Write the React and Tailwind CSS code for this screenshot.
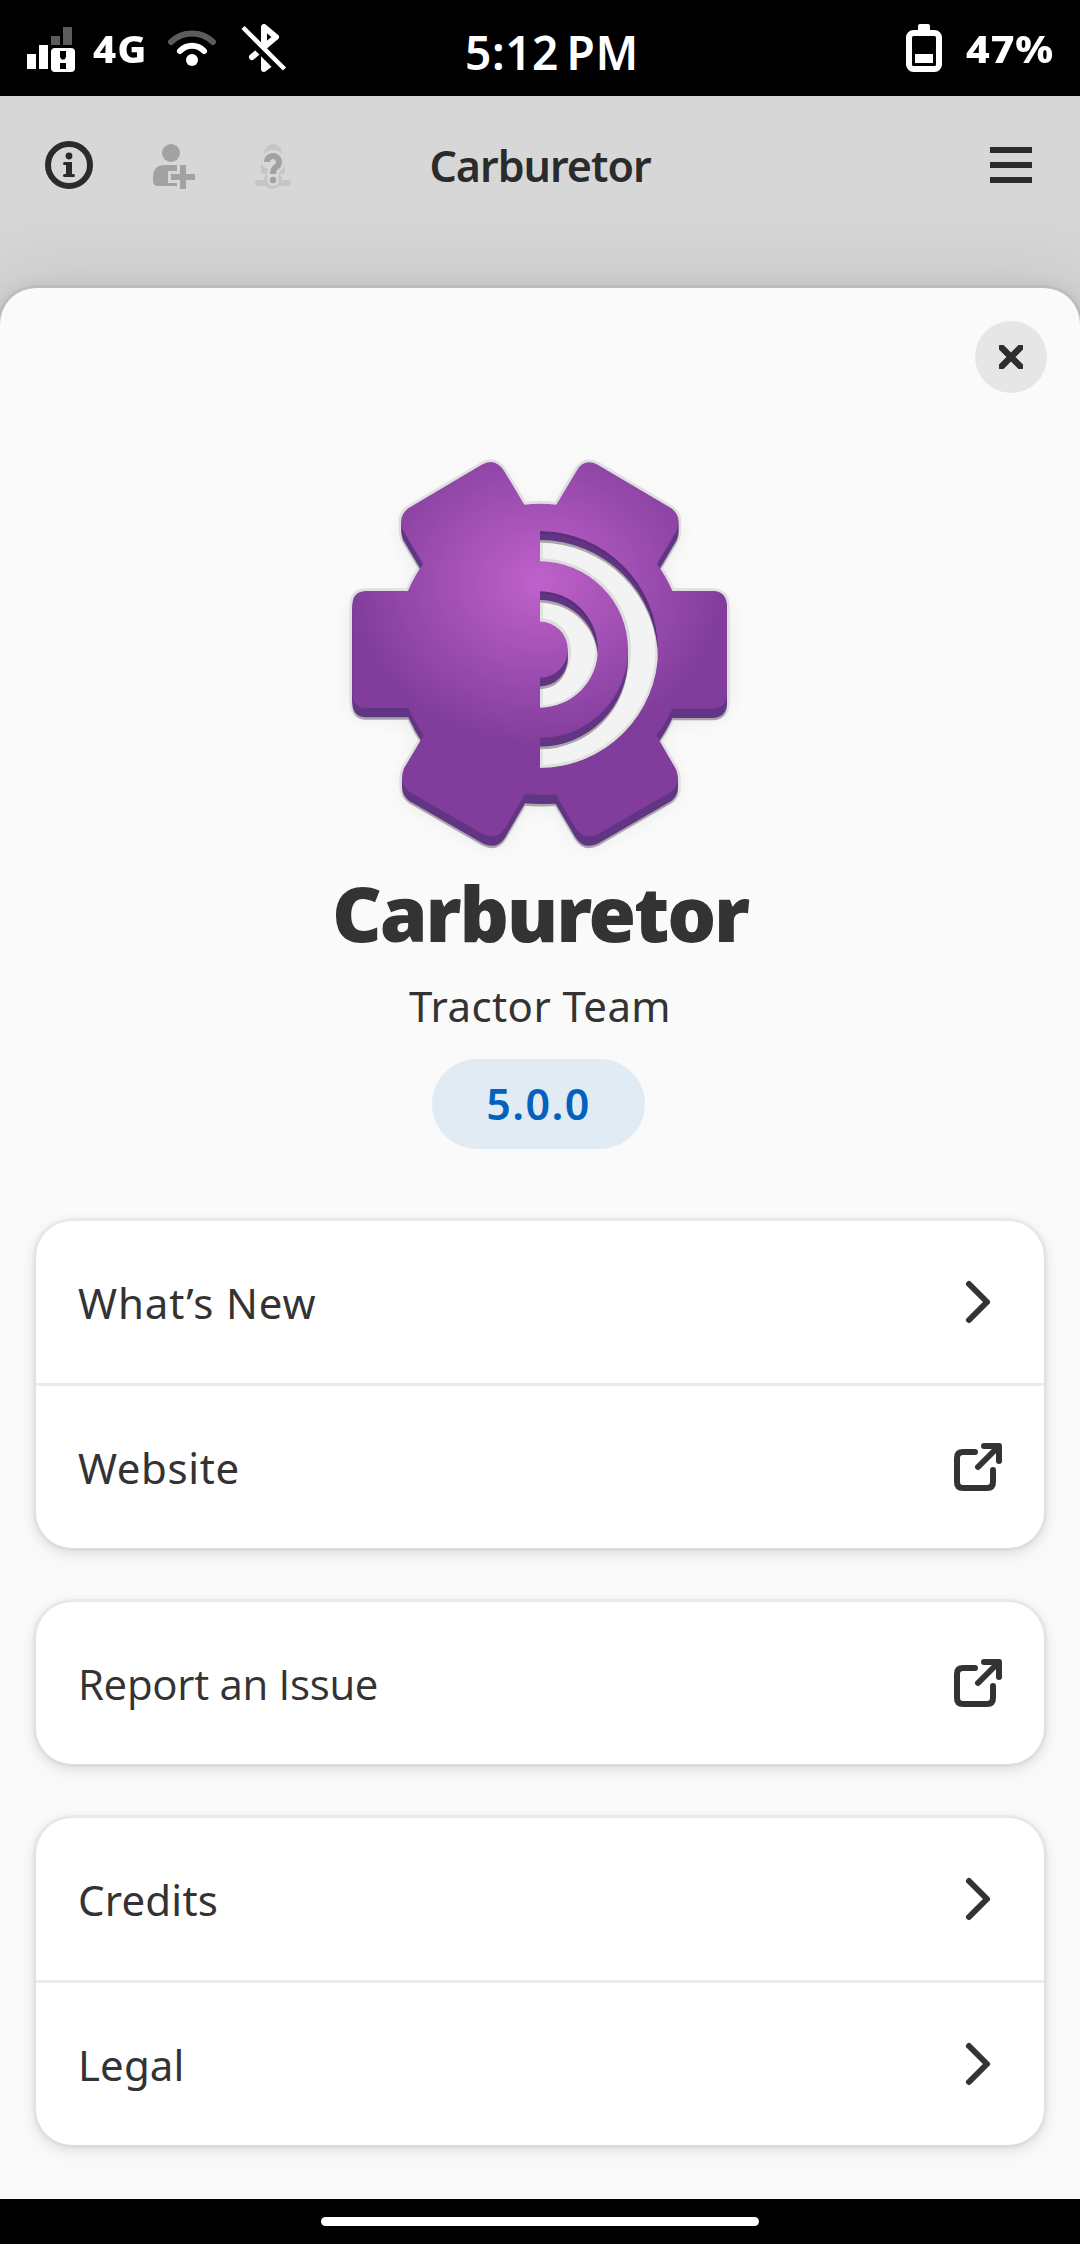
import React from "react";

const FACE =
  "M234 453H110Q67 453 67 497V762Q69 804 110 804H235Q255 848 281 886L222 985Q205 1030 238 1055L460 1183Q500 1202 525 1165L585 1062Q630 1066 677 1063L737 1165Q762 1202 803 1183L1024 1055Q1055 1030 1038 988L979 886Q1007 850 1027 806H1150Q1188 803 1191 765V495Q1188 455 1150 453H1027Q1010 412 981 372L1040 272Q1057 230 1024 205L803 74Q762 54 740 92L679 194Q630 188 583 194L522 92Q495 52 455 74L235 205Q202 230 220 272L279 372Q252 410 234 453Z";

function GearLogo() {
  return (
    <svg viewBox="0 0 1260 1290" className="block h-[430px] w-[420px] overflow-visible">
      <defs>
        <radialGradient
          id="purple"
          gradientUnits="userSpaceOnUse"
          cx="0"
          cy="0"
          r="1"
          gradientTransform="translate(625 425) scale(565 492)"
        >
          <stop offset="0" stopColor="#c061cb" />
          <stop offset="1" stopColor="#813d9c" />
        </radialGradient>
        <filter id="soft" x="-20%" y="-20%" width="140%" height="140%">
          <feGaussianBlur stdDeviation="34" />
        </filter>
        <clipPath id="right">
          <rect x="630" y="200" width="400" height="860" />
        </clipPath>
        <clipPath id="outerHole">
          <circle cx="629" cy="628" r="355" />
        </clipPath>
        <clipPath id="innerHole">
          <circle cx="629" cy="628" r="174.5" />
        </clipPath>
      </defs>
      <path d={FACE} transform="translate(0 27)" fill="#000" opacity="0.07" filter="url(#soft)" />
      <g fill="#dfdfdf" stroke="#dfdfdf" strokeWidth="16" strokeLinejoin="round">
        <path d={FACE} />
        <path d={FACE} transform="translate(0 14)" />
        <path d={FACE} transform="translate(0 27)" />
      </g>
      <path d={FACE} transform="translate(0 35)" fill="#a9a6aa" />
      <g fill="#613583">
        <path d={FACE} transform="translate(0 9)" />
        <path d={FACE} transform="translate(0 18)" />
        <path d={FACE} transform="translate(0 28)" />
      </g>
      <path d={FACE} fill="url(#purple)" />
      <g clipPath="url(#right)">
        <g clipPath="url(#outerHole)">
          <circle cx="629" cy="628" r="355" fill="#613583" />
          <circle cx="629" cy="655" r="355" fill="#a9a6aa" />
          <circle cx="629" cy="663" r="355" fill="#f3f3f3" />
          <circle cx="629" cy="628" r="351" fill="none" stroke="#000" strokeOpacity="0.08" strokeWidth="8" />
          <rect x="630" y="310" width="9" height="670" fill="#e1e1e1" />
          <circle cx="629" cy="629" r="269" fill="none" stroke="#dcdcdc" strokeWidth="10" />
          <circle cx="629" cy="663" r="265" fill="#a9a6aa" />
          <circle cx="629" cy="655" r="265" fill="#613583" />
          <circle cx="629" cy="629" r="265" fill="url(#purple)" />
        </g>
        <g clipPath="url(#innerHole)">
          <circle cx="629" cy="628" r="175" fill="#613583" />
          <circle cx="629" cy="655" r="175" fill="#a9a6aa" />
          <circle cx="629" cy="663" r="175" fill="#f3f3f3" />
          <circle cx="629" cy="628" r="171" fill="none" stroke="#000" strokeOpacity="0.08" strokeWidth="8" />
          <rect x="630" y="491" width="9" height="310" fill="#e1e1e1" />
          <circle cx="629" cy="629" r="89" fill="none" stroke="#dcdcdc" strokeWidth="10" />
          <circle cx="629" cy="640" r="89" fill="none" stroke="#dcdcdc" strokeWidth="10" />
          <circle cx="629" cy="663" r="84.5" fill="#a9a6aa" />
          <circle cx="629" cy="655" r="84.5" fill="#613583" />
          <circle cx="629" cy="642" r="84.5" fill="#613583" />
          <circle cx="629" cy="629" r="84.5" fill="url(#purple)" />
        </g>
      </g>
    </svg>
  );
}

function Signal() {
  return (
    <svg viewBox="0 0 48 48" className="h-12 w-12 overflow-visible">
      <path d="M0 30h9v15H0zM12 21h9v24h-9z" fill="#fff" />
      <path d="M24 12h9v9h-9zM36 3h9v18h-9z" fill="#5c5c5c" />
      <rect x="24" y="24" width="24" height="24" rx="4" fill="#fff" />
      <path d="M33 27h6v6l-1.500 2.500h-3L33 33zM33 39h6v6h-6z" fill="#000" />
    </svg>
  );
}

function Wifi() {
  return (
    <svg viewBox="0 0 48 48" className="h-12 w-12" fill="none" strokeWidth="6" strokeLinecap="round">
      <path d="M3 18A30 30 0 0 1 45 18" stroke="#5c5c5c" />
      <path d="M12 27A16.500 16.500 0 0 1 36 27" stroke="#fff" />
      <circle cx="24" cy="36" r="6" fill="#fff" />
    </svg>
  );
}

function BluetoothOff() {
  return (
    <svg viewBox="0 0 48 48" className="h-12 w-12" fill="none">
      <path
        d="M12 33L36 13L24 3V45L33 38"
        stroke="#fff"
        strokeWidth="6"
        strokeLinecap="round"
        strokeLinejoin="round"
      />
      <path d="M25 34V45L31 39z" fill="#fff" />
      <path d="M0 7L43 50" stroke="#000" strokeWidth="6" />
      <path d="M3 3.500L44.500 45" stroke="#fff" strokeWidth="4.500" />
    </svg>
  );
}

function Battery() {
  return (
    <svg viewBox="0 0 48 48" className="h-12 w-12">
      <path d="M18 8V2q0-2 2-2h8q2 0 2 2v6z" fill="#fff" />
      <rect x="9" y="9" width="30" height="36" rx="4.500" fill="none" stroke="#fff" strokeWidth="6" />
      <path d="M15 30h18v9H15z" fill="#fff" />
    </svg>
  );
}

function Info() {
  return (
    <svg viewBox="0 0 48 48" className="h-12 w-12 text-[#2b2b2b]" fill="currentColor">
      <circle cx="24" cy="24" r="21" fill="none" stroke="currentColor" strokeWidth="6" />
      <circle cx="24" cy="15" r="3.400" />
      <path d="M19.500 21H27v12h1.500a1.500 1.500 0 0 1 0 3h-9a1.500 1.500 0 0 1 0-3H21v-9h-1.500a1.500 1.500 0 0 1 0-3z" />
    </svg>
  );
}

function AddContact() {
  return (
    <svg viewBox="0 0 48 48" className="h-12 w-12" fill="#a2a2a2">
      <circle cx="24" cy="12" r="9" />
      <path d="M18 24H30V30H21V42H30V45H11Q6 45 6 40V36Q6 24 18 24Z" />
      <path d="M33 24h6v9h9v6h-9v9h-6v-9h-9v-6h9z" />
    </svg>
  );
}

function Unknown() {
  return (
    <svg viewBox="0 0 48 48" className="h-12 w-12" fill="none">
      <g fill="#c5c5c5">
        <path d="M15 12a9 9 0 0 1 18 0v4h3v14q0 3-3 3H15q-3 0-3-3V16h3z" />
        <rect x="6" y="39" width="36" height="6" rx="3" />
        <circle cx="24" cy="39" r="9" />
      </g>
      <path d="M18 21A6 6 0 1 1 27 26.200Q24 28 24 33" stroke="#d7d7d7" strokeWidth="12" strokeLinecap="round" />
      <circle cx="24" cy="39" r="6" fill="#d7d7d7" />
      <path d="M18 21A6 6 0 1 1 27 26.200Q24 28 24 33" stroke="#a2a2a2" strokeWidth="6" />
      <circle cx="24" cy="39" r="3.200" fill="#a2a2a2" />
    </svg>
  );
}

function Menu() {
  return (
    <svg viewBox="0 0 48 48" className="h-12 w-12" fill="#2b2b2b">
      <path d="M3 6h42v6H3zM3 21h42v6H3zM3 36h42v6H3z" />
    </svg>
  );
}

function Chevron() {
  return (
    <svg viewBox="0 0 48 48" className="h-12 w-12" fill="none" stroke="#333" strokeWidth="6" strokeLinecap="round" strokeLinejoin="round">
      <path d="M15 6L33 24L15 42" />
    </svg>
  );
}

function External() {
  return (
    <svg viewBox="0 0 48 48" className="h-12 w-12" fill="none" stroke="#333" strokeWidth="6" strokeLinecap="round" strokeLinejoin="round">
      <path d="M21 9H9Q3 9 3 15V39Q3 45 9 45H33Q39 45 39 39V27" />
      <path d="M30 3H45V18M24 24L44 4" />
      <path d="M38 4H44V10z" fill="#333" strokeWidth="2" />
    </svg>
  );
}

const GROUPS = [
  [
    { label: "What’s New", Icon: Chevron, cls: "tracking-[0.9px]" },
    { label: "Website", Icon: External, cls: "tracking-[0.6px]" },
  ],
  [{ label: "Report an Issue", Icon: External, cls: "font-['Open_Sans','Noto_Sans',sans-serif] tracking-[-0.3px]" }],
  [
    { label: "Credits", Icon: Chevron, cls: "tracking-[0.2px]" },
    { label: "Legal", Icon: Chevron, cls: "tracking-[0.1px]" },
  ],
];

export default function App() {
  return (
    <div className="flex h-[2244px] w-[1080px] flex-col overflow-hidden bg-black font-['Noto_Sans','Open_Sans',sans-serif] text-[#333333]">
      <div className="flex h-24 shrink-0 items-center pr-[26px] pl-[27px] text-white">
        <div className="flex w-[438px] items-center">
          <Signal />
          <span className="mt-0.5 ml-[18px] w-[57px] origin-left scale-x-[1.08] text-[37px] leading-[50px] font-extrabold tracking-[1px]">4G</span>
          <span className="ml-[18px] flex"><Wifi /></span>
          <span className="ml-6 flex"><BluetoothOff /></span>
        </div>
        <span className="mt-[7px] text-[46px] leading-[60px] font-semibold tracking-[0.6px] whitespace-nowrap [word-spacing:-5px]">5:12 PM</span>
        <div className="flex flex-1 items-center justify-end">
          <Battery />
          <span className="mt-0.5 ml-[18px] w-[88px] origin-left scale-x-[1.11] text-[37px] leading-[50px] font-extrabold tracking-[0.8px]">47%</span>
        </div>
      </div>

      <div className="flex min-h-0 flex-1 flex-col overflow-hidden bg-[#d7d7d7]">
        <header className="grid h-[138px] shrink-0 grid-cols-[1fr_auto_1fr] items-center pr-[45px] pl-[45px]">
          <div className="flex items-center gap-[54px]">
            <Info />
            <AddContact />
            <Unknown />
          </div>
          <h1 className="pt-0.5 text-[43px] leading-[60px] font-semibold tracking-[-1px] text-[#2b2b2b]">Carburetor</h1>
          <div className="flex justify-end">
            <Menu />
          </div>
        </header>

        <main className="mt-[54px] flex flex-1 flex-col rounded-t-[36px] bg-[#fafafb] shadow-[0_0_0_3px_rgba(0,0,0,0.05),0_6px_24px_3px_rgba(0,0,0,0.09),0_9px_90px_15px_rgba(0,0,0,0.10)]">
          <button className="mt-[33px] mr-[33px] flex h-[72px] w-[72px] items-center justify-center self-end rounded-full bg-[#e6e6e6]">
            <svg viewBox="0 0 24 24" className="h-6 w-6" stroke="#2e2e2e" strokeWidth="6.500" strokeLinecap="round">
              <path d="M2.500 2.500L21.500 21.500M21.500 2.500L2.500 21.500" />
            </svg>
          </button>

          <section className="mt-[47px] flex flex-col items-center">
            <GearLogo />
            <h2 className="mt-px text-[77px] leading-[84px] font-black tracking-[-2.2px]">Carburetor</h2>
            <p className="mt-[21px] text-[42px] leading-[60px] tracking-[0.4px]">Tractor Team</p>
            <div className="mt-[23px] mr-[3px] flex h-[90px] w-[213px] items-center justify-center rounded-full bg-[#e1ebf4] text-[43px] leading-[60px] font-semibold tracking-[1.4px] text-[#0461be]">
              5.0.0
            </div>
          </section>

          <div className="mx-9 mt-[72px] flex flex-col gap-[54px]">
            {GROUPS.map((rows) => (
              <div
                key={rows[0].label}
                className="divide-y-3 divide-[#ebebeb] rounded-[36px] bg-white shadow-[0_0_0_3px_rgba(0,0,0,0.03),0_3px_9px_3px_rgba(0,0,0,0.07),0_6px_18px_6px_rgba(0,0,0,0.03)]"
              >
                {rows.map(({ label, Icon, cls }) => (
                  <div key={label} className="box-content flex h-[162px] items-center justify-between">
                    <span className={`pt-px pl-[42px] text-[42px] leading-[60px] ${cls}`}>{label}</span>
                    <span className="pr-[42px]"><Icon /></span>
                  </div>
                ))}
              </div>
            ))}
          </div>
        </main>
      </div>

      <div className="flex h-[45px] shrink-0 items-center justify-center">
        <div className="h-[9px] w-[438px] rounded-full bg-white" />
      </div>
    </div>
  );
}
